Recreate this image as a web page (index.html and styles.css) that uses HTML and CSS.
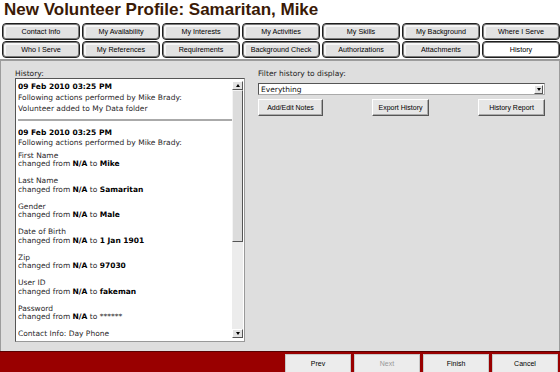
FILE: index.html
```html
<!DOCTYPE html>
<html lang="en">
<head>
  <meta charset="UTF-8">
  <title>New Volunteer Profile</title>
  <link rel="stylesheet" href="styles.css">
</head>
<body>
  <h1 class="title">New Volunteer Profile: Samaritan, Mike</h1>

  <div class="tabs">
    <div class="tab">Contact Info</div>
    <div class="tab">My Availability</div>
    <div class="tab">My Interests</div>
    <div class="tab">My Activities</div>
    <div class="tab">My Skills</div>
    <div class="tab">My Background</div>
    <div class="tab">Where I Serve</div>
    <div class="tab">Who I Serve</div>
    <div class="tab">My References</div>
    <div class="tab">Requirements</div>
    <div class="tab">Background Check</div>
    <div class="tab">Authorizations</div>
    <div class="tab">Attachments</div>
    <div class="tab active">History</div>
  </div>

  <div class="panel">
    <div class="history-col">
      <div class="label">History:</div>
      <div class="history-box">
        <div class="history-text">
          <div class="entry">
            <div class="date">09 Feb 2010 03:25 PM</div>
            <div class="line">Following actions performed by Mike Brady:</div>
            <div class="line">Volunteer added to My Data folder</div>
          </div>
          <hr class="sep">
          <div class="entry">
            <div class="date">09 Feb 2010 03:25 PM</div>
            <div class="line short">Following actions performed by Mike Brady:</div>
          </div>
          <div class="fields">
            <div class="field"><div>First Name</div><div>changed from <b>N/A</b> to <b>Mike</b></div></div>
            <div class="field"><div>Last Name</div><div>changed from <b>N/A</b> to <b>Samaritan</b></div></div>
            <div class="field"><div>Gender</div><div>changed from <b>N/A</b> to <b>Male</b></div></div>
            <div class="field"><div>Date of Birth</div><div>changed from <b>N/A</b> to <b>1 Jan 1901</b></div></div>
            <div class="field"><div>Zip</div><div>changed from <b>N/A</b> to <b>97030</b></div></div>
            <div class="field"><div>User ID</div><div>changed from <b>N/A</b> to <b>fakeman</b></div></div>
            <div class="field"><div>Password</div><div>changed from <b>N/A</b> to ******</div></div>
            <div class="field"><div>Contact Info: Day Phone</div><div>changed from <b>N/A</b> to</div></div>
          </div>
        </div>
        <div class="scrollbar">
          <div class="arrow up"></div>
          <div class="thumb"></div>
          <div class="track"></div>
          <div class="arrow down"></div>
        </div>
      </div>
    </div>

    <div class="filter-col">
      <div class="label">Filter history to display:</div>
      <div class="select">
        <span class="select-value">Everything</span>
        <span class="select-btn"></span>
      </div>
      <div class="actions">
        <button class="btn notes">Add/Edit Notes</button>
        <button class="btn export">Export History</button>
        <button class="btn report">History Report</button>
      </div>
    </div>
  </div>

  <div class="footer">
    <button class="nav">Prev</button>
    <button class="nav disabled">Next</button>
    <button class="nav">Finish</button>
    <button class="nav">Cancel</button>
  </div>
</body>
</html>
```

FILE: styles.css
```css
body {
  margin: 0;
  width: 560px;
  height: 372px;
  overflow: hidden;
  background: #fff;
  font-family: "DejaVu Sans", sans-serif;
  display: flex;
  flex-direction: column;
}

.title {
  margin: 0;
  padding-left: 4px;
  font: bold 17px/20px "Liberation Sans", Arial, sans-serif;
  color: #3a1a06;
}

/* tabs */
.tabs {
  display: grid;
  grid-template-columns: repeat(7, 78px);
  grid-auto-rows: 17px;
  column-gap: 2px;
  row-gap: 1px;
  padding: 0 0 0 2px;
  margin: 3px 0 1px;
}

.tab {
  box-sizing: border-box;
  border: 1px solid #1e1e1e;
  border-radius: 4px;
  background: #e2e2e2;
  box-shadow: inset 0 0 0 1px #7a7a7a, inset 1px 1px 0 2px #f6f6f6;
  font: 7.2px/15px "Liberation Sans", Arial, sans-serif;
  text-align: center;
  color: #000;
}

.tab.active {
  background: #fff;
  box-shadow: inset 0 0 0 1px #7a7a7a;
}

/* main panel */
.panel {
  flex: 1;
  display: flex;
  background: #dedede;
  border-top: 2px solid #9c9c9c;
  border-left: 1px solid #9c9c9c;
  border-right: 1px solid #9c9c9c;
  padding: 9px 0 0 14px;
}

.label {
  font-size: 7.5px;
  line-height: 8px;
  color: #222;
}

.history-col {
  width: 230px;
}

.history-box {
  display: flex;
  height: 264px;
  box-sizing: border-box;
  border: 1px solid #555;
  border-right-color: #999;
  border-bottom-color: #999;
  background: #fff;
  padding: 2px 1px 3px 2px;
}

.history-text {
  flex: 1;
  overflow: hidden;
  font-size: 7.5px;
  color: #2a1f2a;
}

.history-text b {
  color: #000;
}

.entry {
  line-height: 11px;
}

.date {
  font-weight: bold;
  color: #000;
}

.line.short {
  line-height: 10px;
}

.sep {
  margin: 5px 0 5.5px;
  border: 0;
  height: 2px;
  background: #aaa;
}

.fields {
  margin-top: 4.2px;
}

.field {
  line-height: 8.6px;
  margin-bottom: 8.3px;
  white-space: nowrap;
}

/* fake scrollbar */
.scrollbar {
  width: 11px;
  display: flex;
  flex-direction: column;
}

.arrow {
  box-sizing: border-box;
  height: 9px;
  background: #e2e2e2;
  border: 1px solid;
  border-color: #fff #555 #555 #fff;
  display: flex;
  align-items: center;
  justify-content: center;
}

.arrow::after {
  content: "";
  border-left: 2.5px solid transparent;
  border-right: 2.5px solid transparent;
}

.arrow.up::after {
  border-bottom: 3px solid #000;
}

.arrow.down::after {
  border-top: 3px solid #000;
}

.thumb {
  box-sizing: border-box;
  height: 152px;
  background: #dcdcdc;
  border: 1px solid;
  border-color: #f4f4f4 #555 #555 #f4f4f4;
}

.track {
  flex: 1;
  background: #ececec;
}

/* filter side */
.filter-col {
  width: 287px;
  margin-left: 13px;
}

.select {
  display: flex;
  align-items: center;
  box-sizing: border-box;
  height: 12px;
  margin-top: 5px;
  background: #fff;
  border: 1px solid #555;
  border-right-color: #aaa;
  border-bottom-color: #aaa;
}

.select-value {
  flex: 1;
  padding-left: 2px;
  font-size: 7.5px;
  color: #111;
}

.select-btn {
  box-sizing: border-box;
  width: 9px;
  height: 9px;
  margin-right: 1px;
  background: #e2e2e2;
  border: 1px solid;
  border-color: #fff #555 #555 #fff;
  display: flex;
  align-items: center;
  justify-content: center;
}

.select-btn::after {
  content: "";
  border-left: 2.5px solid transparent;
  border-right: 2.5px solid transparent;
  border-top: 3px solid #000;
}

.actions {
  display: flex;
  justify-content: space-between;
  margin-top: 4px;
}

.btn {
  height: 17px;
  padding: 0;
  background: #e6e6e6;
  border: 1px solid;
  border-color: #fff #555 #555 #fff;
  box-shadow: inset -1px -1px 0 #aaa;
  font: 7px "Liberation Sans", Arial, sans-serif;
  color: #000;
}

.btn.notes { width: 65px; }
.btn.export { width: 57px; }
.btn.report { width: 67px; }

/* footer */
.footer {
  height: 21px;
  box-sizing: border-box;
  display: flex;
  justify-content: flex-end;
  gap: 3px;
  padding: 2px 2px 0 0;
  background: #990000;
  border-top: 1px solid #5a0000;
}

.nav {
  width: 66px;
  height: 22px;
  padding: 0 0 3px;
  background: #ececec;
  border: 1px solid #c8c8c8;
  font: 7px "Liberation Sans", Arial, sans-serif;
  color: #000;
}

.nav.disabled {
  color: #999;
}
```
